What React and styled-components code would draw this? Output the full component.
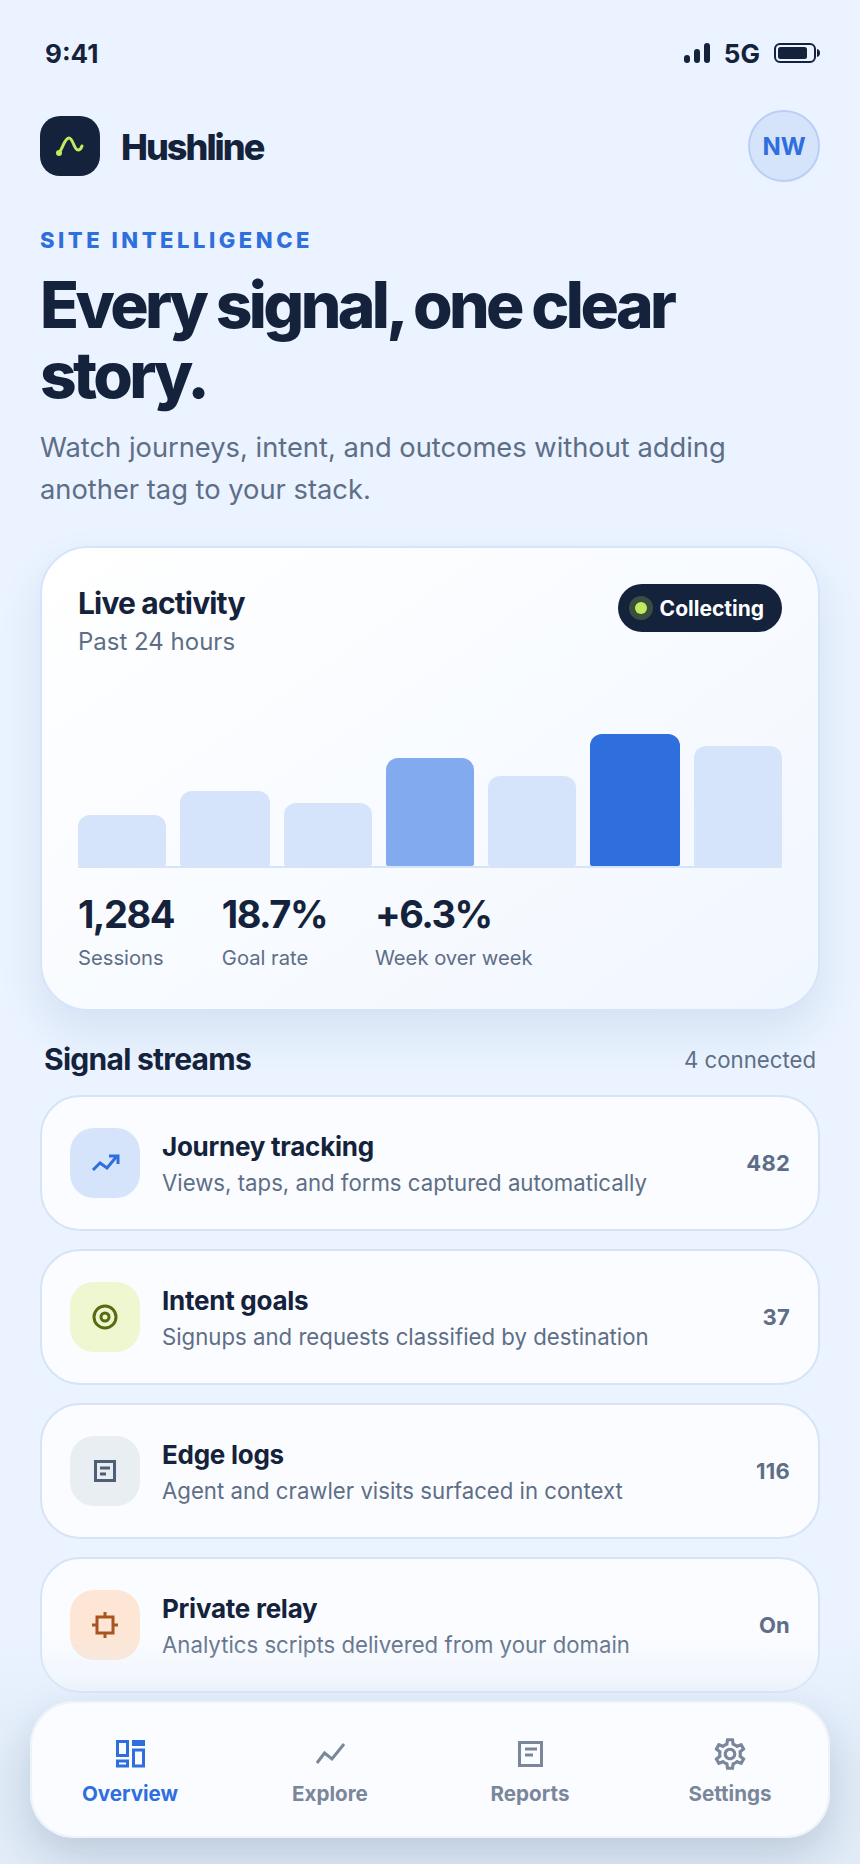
import React from "react";
import styled, { createGlobalStyle } from "styled-components";
import { MdOutlineSettings } from "react-icons/md";

const BARS = [
  { h: 34, tone: "soft" },
  { h: 50, tone: "soft" },
  { h: 42, tone: "soft" },
  { h: 72, tone: "mid" },
  { h: 60, tone: "soft" },
  { h: 88, tone: "strong" },
  { h: 80, tone: "soft" },
];

const BAR_COLORS = { soft: "#d6e4fb", mid: "#82aaee", strong: "#2f6fdd" };

const STATS = [
  { value: "1,284", label: "Sessions" },
  { value: "18.7%", label: "Goal rate" },
  { value: "+6.3%", label: "Week over week" },
];

const TINTS = {
  blue: { bg: "#d6e4fb", fg: "#2f6fdd" },
  lime: { bg: "#eef7cf", fg: "#566c0e" },
  slate: { bg: "#e9eef3", fg: "#4f5f78" },
  orange: { bg: "#fde6d5", fg: "#a8541f" },
};

const TrendIcon = () => (
  <svg width="38" height="38" viewBox="0 0 38 38" fill="none" stroke="currentColor" strokeWidth="3">
    <path d="M7 26l7-7 7 5 10-12" />
    <path d="M23 12h9v8" />
  </svg>
);

const TargetIcon = () => (
  <svg width="38" height="38" viewBox="0 0 38 38" fill="none" stroke="currentColor" strokeWidth="3">
    <circle cx="19" cy="19" r="11" />
    <circle cx="19" cy="19" r="4" />
  </svg>
);

const LogIcon = () => (
  <svg width="38" height="38" viewBox="0 0 38 38" fill="none" stroke="currentColor" strokeWidth="3">
    <rect x="9.500" y="9.500" width="19" height="19" />
    <path d="M14 16h10M14 22h6" />
  </svg>
);

const ChipIcon = () => (
  <svg width="38" height="38" viewBox="0 0 38 38" fill="none" stroke="currentColor" strokeWidth="3">
    <rect x="11" y="11" width="16" height="16" />
    <path d="M19 6v5M19 27v5M6 19h5M27 19h5" />
  </svg>
);

const STREAMS = [
  { title: "Journey tracking", desc: "Views, taps, and forms captured automatically", value: "482", tint: "blue", Icon: TrendIcon },
  { title: "Intent goals", desc: "Signups and requests classified by destination", value: "37", tint: "lime", Icon: TargetIcon },
  { title: "Edge logs", desc: "Agent and crawler visits surfaced in context", value: "116", tint: "slate", Icon: LogIcon },
  { title: "Private relay", desc: "Analytics scripts delivered from your domain", value: "On", tint: "orange", Icon: ChipIcon },
];

const OverviewIcon = () => (
  <svg width="40" height="40" viewBox="0 0 40 40" fill="none" stroke="currentColor" strokeWidth="3">
    <rect x="7.500" y="7.500" width="10" height="14" />
    <rect x="7.500" y="27" width="10" height="5" />
    <rect x="23.500" y="7.500" width="10" height="3" />
    <rect x="23.500" y="16" width="10" height="16" />
  </svg>
);

const ExploreIcon = () => (
  <svg width="40" height="40" viewBox="0 0 40 40" fill="none" stroke="currentColor" strokeWidth="3">
    <path d="M7 29l7.500-10 7.500 6 12-15" />
  </svg>
);

const ReportsIcon = () => (
  <svg width="40" height="40" viewBox="0 0 40 40" fill="none" stroke="currentColor" strokeWidth="3">
    <rect x="9.500" y="8.500" width="22" height="23" />
    <path d="M15 15h12M15 21h8" />
  </svg>
);

const TABS = [
  { label: "Overview", active: true, icon: <OverviewIcon /> },
  { label: "Explore", icon: <ExploreIcon /> },
  { label: "Reports", icon: <ReportsIcon /> },
  { label: "Settings", icon: <MdOutlineSettings size={38} /> },
];

export default function App() {
  return (
    <Screen>
      <GlobalStyle />
      <StatusBar>
        <Time>9:41</Time>
        <StatusRight>
          <svg width="26" height="20" viewBox="0 0 26 20" fill="#14233b">
            <rect x="0" y="12" width="6" height="8" rx="3" />
            <rect x="10" y="6" width="6" height="14" rx="3" />
            <rect x="20" y="0" width="6" height="20" rx="3" />
          </svg>
          <Network>5G</Network>
          <svg width="46" height="20" viewBox="0 0 46 20" fill="none">
            <rect x="1" y="1" width="40" height="18" rx="5" stroke="#14233b" strokeWidth="2" />
            <rect x="4" y="4" width="29" height="12" rx="2.500" fill="#14233b" />
            <path d="M43 6c2 .5 3 2 3 4s-1 3.500-3 4z" fill="#14233b" />
          </svg>
        </StatusRight>
      </StatusBar>

      <Header>
        <Brand>
          <Logo>
            <svg width="30" height="22" viewBox="0 0 30 22" fill="none" stroke="#c6ea5c" strokeWidth="3" strokeLinecap="round">
              <path d="M3 18c4-1 6-15 11-15 4 0 5 12 9 12 2 0 3-1 4-4" />
              <circle cx="4" cy="18" r="3" fill="#c6ea5c" stroke="none" />
            </svg>
          </Logo>
          <BrandName>Hushline</BrandName>
        </Brand>
        <Avatar>NW</Avatar>
      </Header>

      <Hero>
        <Eyebrow>SITE INTELLIGENCE</Eyebrow>
        <Headline>Every signal, one clear story.</Headline>
        <Lede>Watch journeys, intent, and outcomes without adding another tag to your stack.</Lede>
      </Hero>

      <ActivityCard>
        <CardTop>
          <div>
            <CardTitle>Live activity</CardTitle>
            <CardSub>Past 24 hours</CardSub>
          </div>
          <StatusPill>
            <PulseDot />
            Collecting
          </StatusPill>
        </CardTop>
        <Chart>
          {BARS.map((bar, i) => (
            <Bar key={i} $tone={bar.tone} style={{ height: `${bar.h}%` }} />
          ))}
        </Chart>
        <Stats>
          {STATS.map((stat) => (
            <div key={stat.label}>
              <StatValue>{stat.value}</StatValue>
              <StatLabel>{stat.label}</StatLabel>
            </div>
          ))}
        </Stats>
      </ActivityCard>

      <SectionHead>
        <SectionTitle>Signal streams</SectionTitle>
        <SectionNote>4 connected</SectionNote>
      </SectionHead>

      <StreamList>
        {STREAMS.map(({ title, desc, value, tint, Icon }) => (
          <StreamRow key={title}>
            <StreamIcon $tint={tint}>
              <Icon />
            </StreamIcon>
            <StreamText>
              <StreamTitle>{title}</StreamTitle>
              <StreamDesc>{desc}</StreamDesc>
            </StreamText>
            <StreamValue>{value}</StreamValue>
          </StreamRow>
        ))}
      </StreamList>

      <BottomFade />
      <TabBar>
        {TABS.map((tab) => (
          <Tab key={tab.label} $active={tab.active}>
            <TabIcon>{tab.icon}</TabIcon>
            {tab.label}
          </Tab>
        ))}
      </TabBar>
    </Screen>
  );
}

const GlobalStyle = createGlobalStyle`
  html, body {
    margin: 0;
    padding: 0;
    background: #eaf3ff;
  }
  * {
    box-sizing: border-box;
  }
`;

const Screen = styled.div`
  position: relative;
  width: 860px;
  height: 1864px;
  overflow: hidden;
  padding: 0 40px;
  background: #eaf3ff;
  color: #14233b;
  font-family: Inter, "Noto Sans", sans-serif;
`;

const StatusBar = styled.div`
  display: flex;
  justify-content: space-between;
  align-items: center;
  height: 106px;
  padding: 0 0 0 5px;
`;

const Time = styled.div`
  font-size: 26px;
  font-weight: 700;
`;

const StatusRight = styled.div`
  display: flex;
  align-items: center;
  gap: 14px;
`;

const Network = styled.div`
  font-size: 26px;
  font-weight: 700;
`;

const Header = styled.div`
  display: flex;
  justify-content: space-between;
  align-items: center;
  height: 72px;
  margin-top: 4px;
`;

const Brand = styled.div`
  display: flex;
  align-items: center;
  gap: 21px;
`;

const Logo = styled.div`
  display: flex;
  align-items: center;
  justify-content: center;
  width: 60px;
  height: 60px;
  border-radius: 20px;
  background: #14233b;
`;

const BrandName = styled.div`
  padding-top: 1px;
  font-size: 36px;
  font-weight: 800;
  letter-spacing: -0.055em;
`;

const Avatar = styled.div`
  display: flex;
  align-items: center;
  justify-content: center;
  width: 72px;
  height: 72px;
  border-radius: 50%;
  border: 2px solid #b9cff5;
  background: #d6e4fb;
  color: #2f6fdd;
  font-size: 24px;
  font-weight: 700;
`;

const Hero = styled.div`
  margin-top: 44px;
`;

const Eyebrow = styled.div`
  font-size: 22px;
  line-height: 28px;
  font-weight: 800;
  letter-spacing: 0.16em;
  color: #2f6fdd;
`;

const Headline = styled.h1`
  margin: 16px 0 0;
  font-size: 64px;
  line-height: 70px;
  font-weight: 800;
  letter-spacing: -0.056em;
`;

const Lede = styled.p`
  margin: 17px 0 0;
  font-size: 27.3px;
  line-height: 42px;
  color: #5e6e86;
`;

const ActivityCard = styled.section`
  margin-top: 35px;
  padding: 36px 36px 37px;
  border: 2px solid #d6e4fb;
  border-radius: 48px;
  background: linear-gradient(145deg, #ffffff, #f1f7ff);
  box-shadow: 0 20px 44px rgba(32, 70, 130, 0.1);
`;

const CardTop = styled.div`
  display: flex;
  justify-content: space-between;
  align-items: flex-start;
`;

const CardTitle = styled.div`
  font-size: 30px;
  line-height: 38px;
  font-weight: 700;
  letter-spacing: -0.028em;
`;

const CardSub = styled.div`
  margin-top: 4px;
  font-size: 24px;
  line-height: 32px;
  color: #5e6e86;
`;

const StatusPill = styled.div`
  display: flex;
  align-items: center;
  gap: 11px;
  height: 48px;
  padding: 0 18px 0 15px;
  border-radius: 24px;
  background: #14233b;
  color: #fff;
  font-size: 21px;
  font-weight: 700;
`;

const PulseDot = styled.span`
  width: 12px;
  height: 12px;
  margin: 0 2px 0 2px;
  border-radius: 50%;
  background: #c6ea5c;
  box-shadow: 0 0 0 6px rgba(198, 234, 92, 0.22);
`;

const Chart = styled.div`
  display: grid;
  grid-template-columns: 88px 90px 88px 88px 88px 90px 88px;
  gap: 14px;
  align-items: end;
  height: 152px;
  margin-top: 58px;
  border-bottom: 2px solid #d6e4fb;
`;

const Bar = styled.div`
  border-radius: 12px 12px 2px 2px;
  background: ${(p) => BAR_COLORS[p.$tone]};
`;

const Stats = styled.div`
  display: flex;
  gap: 48px;
  margin-top: 24px;
`;

const StatValue = styled.div`
  font-size: 38px;
  line-height: 44px;
  font-weight: 700;
  letter-spacing: -0.04em;
`;

const StatLabel = styled.div`
  margin-top: 8px;
  font-size: 20.2px;
  line-height: 28px;
  color: #5e6e86;
`;

const SectionHead = styled.div`
  display: flex;
  justify-content: space-between;
  align-items: center;
  margin-top: 26px;
  padding: 0 4px;
`;

const SectionTitle = styled.h2`
  margin: 0;
  font-size: 30px;
  line-height: 44px;
  font-weight: 700;
  letter-spacing: -0.024em;
`;

const SectionNote = styled.div`
  font-size: 22.2px;
  color: #5e6e86;
`;

const StreamList = styled.div`
  display: flex;
  flex-direction: column;
  gap: 18px;
  margin-top: 14px;
`;

const StreamRow = styled.div`
  display: flex;
  align-items: center;
  gap: 22px;
  height: 136px;
  padding: 0 28px;
  border: 2px solid #d6e4f5;
  border-radius: 40px;
  background: #fafcff;
`;

const StreamIcon = styled.div`
  display: flex;
  align-items: center;
  justify-content: center;
  flex: none;
  width: 70px;
  height: 70px;
  border-radius: 24px;
  background: ${(p) => TINTS[p.$tint].bg};
  color: ${(p) => TINTS[p.$tint].fg};
`;

const StreamText = styled.div`
  flex: 1;
  min-width: 0;
  padding-top: 2px;
`;

const StreamTitle = styled.div`
  font-size: 26px;
  line-height: 34px;
  font-weight: 700;
  letter-spacing: -0.01em;
`;

const StreamDesc = styled.div`
  margin-top: 4px;
  font-size: 22.2px;
  line-height: 30px;
  color: #5e6e86;
`;

const StreamValue = styled.div`
  font-size: 22px;
  font-weight: 700;
  letter-spacing: 0.01em;
  color: #5e6e86;
`;

const BottomFade = styled.div`
  position: absolute;
  left: 0;
  right: 0;
  bottom: 0;
  height: 230px;
  background: linear-gradient(180deg, rgba(226, 236, 250, 0), rgba(226, 236, 250, 0.55) 30%, #e2ecf8 60%);
  pointer-events: none;
`;

const TabBar = styled.nav`
  position: absolute;
  left: 30px;
  right: 30px;
  bottom: 26px;
  display: grid;
  grid-template-columns: repeat(4, 1fr);
  height: 137px;
  border-radius: 44px;
  background: #fbfcff;
  box-shadow: inset 0 0 0 2px #eef2f9, 0 18px 44px rgba(24, 50, 90, 0.18);
`;

const Tab = styled.div`
  display: flex;
  flex-direction: column;
  align-items: center;
  justify-content: center;
  gap: 7px;
  padding-top: 1px;
  font-size: 20.6px;
  font-weight: 700;
  color: ${(p) => (p.$active ? "#2f6fdd" : "#7a879b")};
`;

const TabIcon = styled.div`
  display: flex;
  align-items: center;
  justify-content: center;
  width: 40px;
  height: 40px;
`;
